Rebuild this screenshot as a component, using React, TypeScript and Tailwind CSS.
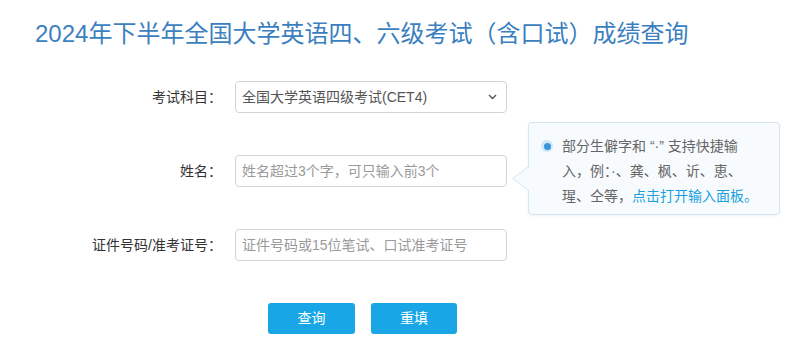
import React from "react";

const font = "font-['Liberation_Sans','Noto_Sans_CJK_SC',sans-serif]";

const rows = [
  { label: "考试科目：", kind: "select", value: "全国大学英语四级考试(CET4)" },
  { label: "姓名：", kind: "input", value: "姓名超过3个字，可只输入前3个" },
  { label: "证件号码/准考证号：", kind: "input", value: "证件号码或15位笔试、口试准考证号" },
];

function Chevron() {
  return (
    <svg width="9" height="6" viewBox="0 0 9 6" className="shrink-0">
      <path d="M1 1 L4.5 4.5 L8 1" fill="none" stroke="#555" strokeWidth="1.4" />
    </svg>
  );
}

function Tip() {
  return (
    <div className="absolute left-[528px] top-[122px] w-[252px] h-[93px] rounded-[4px] border border-[#d3e6f3] bg-[#f7fbfe] pl-[12px] pt-[11px] flex items-start gap-[9px] shadow-[0_1px_3px_rgba(0,0,0,0.05)]">
      {/* arrow pointing at the name field */}
      <svg width="17" height="23" viewBox="0 0 17 23" className="absolute left-[-17px] top-[44px]">
        <polygon points="17,0 0.7,11.5 17,23" fill="#f7fbfe" />
        <path d="M16 0 L0.7 11.5 L16 23" fill="none" stroke="#d3e6f3" strokeWidth="1" />
      </svg>
      <span className="mt-[6px] size-[12px] rounded-full bg-[#cfe8f7] flex items-center justify-center shrink-0">
        <span className="size-[7px] rounded-full bg-[#3a95dc]" />
      </span>
      <p className="text-[14px] leading-[25px] text-[#666] whitespace-nowrap">
        部分生僻字和 “·” 支持快捷输
        <br />
        入，例：·、龚、枫、䜣、恵、
        <br />
        瑆、仝等，<span className="text-[#1a9fe0]">点击打开输入面板。</span>
      </p>
    </div>
  );
}

export default function App() {
  return (
    <div className={`relative w-[800px] h-[355px] bg-white overflow-hidden ${font}`}>
      <h1 className="pl-[35px] pt-[18px] text-[24px] leading-[32px] text-[#3b7fc0] font-normal whitespace-nowrap">
        2024年下半年全国大学英语四、六级考试（含口试）成绩查询
      </h1>

      <div className="mt-[31px] flex flex-col gap-[42px]">
        {rows.map((r) => (
          <div key={r.label} className="flex items-center h-[32px]">
            <label className="w-[222px] text-right text-[14px] text-[#333] whitespace-nowrap">{r.label}</label>
            <div className="ml-[13px] w-[272px] h-[32px] rounded-[4px] border border-[#d4d4d4] bg-white flex items-center justify-between pl-[6px] pr-[9px] text-[14px]">
              <span className={r.kind === "select" ? "text-[#555]" : "text-[#9a9a9a]"}>{r.value}</span>
              {r.kind === "select" && <Chevron />}
            </div>
          </div>
        ))}

        <div className="flex pl-[268px] gap-[16px]">
          <button className="w-[87px] h-[31px] rounded-[3px] bg-[#18a6e7] text-white text-[14px]">查询</button>
          <button className="w-[86px] h-[31px] rounded-[3px] bg-[#18a6e7] text-white text-[14px]">重填</button>
        </div>
      </div>

      <Tip />
    </div>
  );
}
